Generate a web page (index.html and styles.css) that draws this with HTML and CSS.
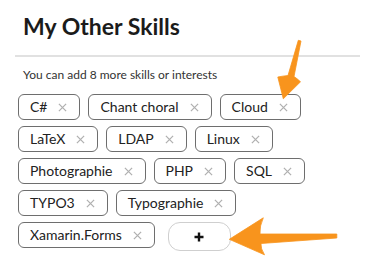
FILE: index.html
```html
<!DOCTYPE html>
<html lang="en">
<head>
<meta charset="utf-8">
<title>My Other Skills</title>
<link rel="stylesheet" href="styles.css">
</head>
<body>
<section class="card">
  <h1 class="title">My Other Skills</h1>
  <hr class="divider">
  <p class="hint">You can add 8 more skills or interests</p>
  <ul class="tags">
    <li class="tag"><span>C#</span><svg class="x" viewBox="0 0 10 10"><path d="M1 1L9 9M9 1L1 9"/></svg></li>
    <li class="tag"><span>Chant choral</span><svg class="x" viewBox="0 0 10 10"><path d="M1 1L9 9M9 1L1 9"/></svg></li>
    <li class="tag"><span>Cloud</span><svg class="x" viewBox="0 0 10 10"><path d="M1 1L9 9M9 1L1 9"/></svg></li>
    <li class="tag"><span>LaTeX</span><svg class="x" viewBox="0 0 10 10"><path d="M1 1L9 9M9 1L1 9"/></svg></li>
    <li class="tag"><span>LDAP</span><svg class="x" viewBox="0 0 10 10"><path d="M1 1L9 9M9 1L1 9"/></svg></li>
    <li class="tag"><span>Linux</span><svg class="x" viewBox="0 0 10 10"><path d="M1 1L9 9M9 1L1 9"/></svg></li>
    <li class="tag"><span>Photographie</span><svg class="x" viewBox="0 0 10 10"><path d="M1 1L9 9M9 1L1 9"/></svg></li>
    <li class="tag"><span>PHP</span><svg class="x" viewBox="0 0 10 10"><path d="M1 1L9 9M9 1L1 9"/></svg></li>
    <li class="tag"><span>SQL</span><svg class="x" viewBox="0 0 10 10"><path d="M1 1L9 9M9 1L1 9"/></svg></li>
    <li class="tag"><span>TYPO3</span><svg class="x" viewBox="0 0 10 10"><path d="M1 1L9 9M9 1L1 9"/></svg></li>
    <li class="tag"><span>Typographie</span><svg class="x" viewBox="0 0 10 10"><path d="M1 1L9 9M9 1L1 9"/></svg></li>
    <li class="tag"><span>Xamarin.Forms</span><svg class="x" viewBox="0 0 10 10"><path d="M1 1L9 9M9 1L1 9"/></svg></li>
    <li class="add"><svg class="plus" viewBox="0 0 10 10"><path d="M5 0.5V9.5M0.5 5H9.5"/></svg></li>
  </ul>
</section>
<svg class="arrow" width="375" height="267" viewBox="0 0 375 267">
  <path d="M298.3 40.3 L301 41 L294 76.5 Q297 78.5 300.5 81.8 L283.3 98.8 L277.8 77 Q283 76 288 75.5 Z"/>
  <path d="M336.8 234 L336.8 238 L261 243.5 Q260.5 248.5 264.5 254.8 L229.3 239.3 L263.3 217.8 Q259.5 226 260 234 Z"/>
</svg>
</body>
</html>
```
FILE: styles.css
```css
html, body {
  margin: 0;
  padding: 0;
  background: #fff;
}
body {
  font-family: Lato, "Noto Sans", sans-serif;
  color: #222;
  position: relative;
  width: 375px;
  height: 267px;
  overflow: hidden;
}
.card {
  margin: 0 15px;
  padding-top: 12px;
}
.title {
  margin: 0 0 0 8px;
  font-size: 23px;
  font-weight: 700;
  line-height: 28px;
  color: #1b1b1b;
}
.divider {
  margin: 15px 0 0;
  border: 0;
  height: 2px;
  background: #e1e1e1;
}
.hint {
  margin: 10px 0 0 8px;
  font-size: 12px;
  line-height: 15px;
  color: #333;
}
.tags {
  list-style: none;
  margin: 12px 0 0 3px;
  padding: 0;
  display: flex;
  flex-wrap: wrap;
  align-items: flex-start;
  gap: 6px 8px;
}
.tag {
  display: flex;
  align-items: center;
  box-sizing: border-box;
  height: 26px;
  padding: 0 12px 0 11px;
  border: 1px solid #6e6e6e;
  border-radius: 6px;
  font-size: 14px;
  line-height: 1;
  color: #222;
}
.x {
  width: 9px;
  height: 9px;
  margin-left: 11px;
  fill: none;
  stroke: #b0b0b0;
  stroke-width: 1.4;
}
.add {
  box-sizing: border-box;
  width: 63px;
  height: 29px;
  margin-left: 5px;
  border: 1px solid #cfcfcf;
  border-radius: 12px;
  display: flex;
  align-items: center;
  justify-content: center;
}
.plus {
  width: 10px;
  height: 10px;
  fill: none;
  stroke: #111;
  stroke-width: 2.4;
}
.arrow {
  position: absolute;
  left: 0;
  top: 0;
  pointer-events: none;
}
.arrow path {
  fill: #f8941d;
  stroke: #f8941d;
  stroke-width: 0.8;
  stroke-linejoin: round;
}
```
